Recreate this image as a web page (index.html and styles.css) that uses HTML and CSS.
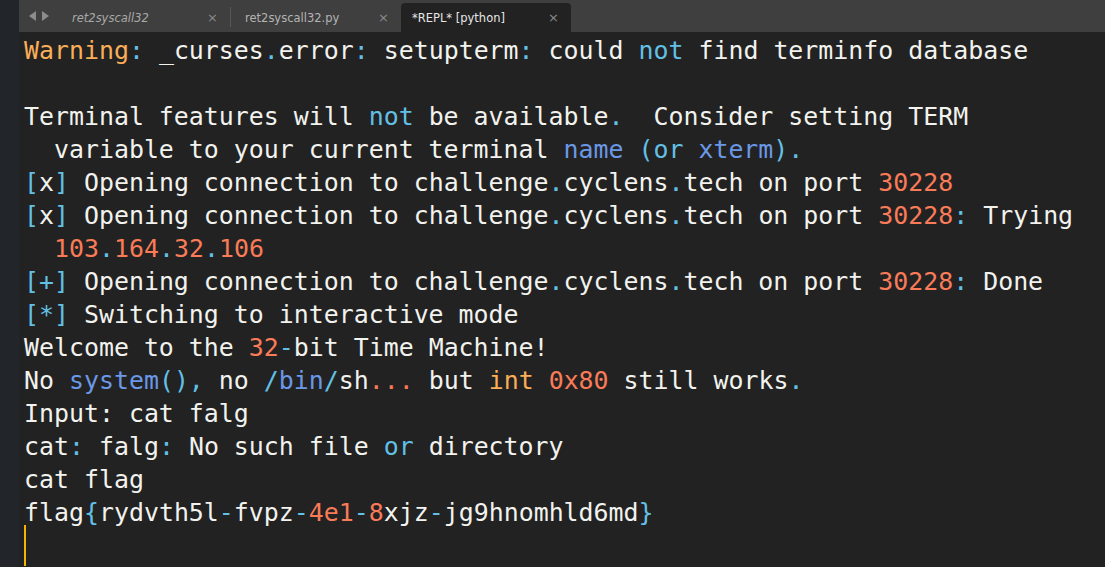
FILE: index.html
```html
<!DOCTYPE html>
<html>
<head>
<meta charset="utf-8">
<link rel="stylesheet" href="styles.css">
</head>
<body>
<div class="window">
  <div class="sidebar"></div>
  <div class="main">
    <div class="tabbar">
      <div class="nav">
        <svg width="24" height="12" viewBox="0 0 24 12"><path d="M8 1 L1 6 L8 11 Z" fill="#8c8c8c"/><path d="M14 1 L21 6 L14 11 Z" fill="#8c8c8c"/></svg>
      </div>
      <div class="tab preview"><span class="label">ret2syscall32</span><span class="close">×</span></div>
      <div class="sep"></div>
      <div class="tab"><span class="label">ret2syscall32.py</span><span class="close">×</span></div>
      <div class="tab active"><span class="label">*REPL* [python]</span><span class="close">×</span></div>
    </div>
    <div class="editor">
      <div class="line"><span class="o">Warning</span><span class="c">:</span> _curses<span class="c">.</span>error<span class="c">:</span> setupterm<span class="c">:</span> could <span class="c">not</span> find terminfo database</div>
      <div class="line"> </div>
      <div class="line">Terminal features will <span class="c">not</span> be available<span class="c">.</span>  Consider setting TERM</div>
      <div class="line">  variable to your current terminal <span class="b">name</span> <span class="c">(or</span> <span class="b">xterm</span><span class="c">).</span></div>
      <div class="line"><span class="c">[</span>x<span class="c">]</span> Opening connection to challenge<span class="c">.</span>cyclens<span class="c">.</span>tech on port <span class="n">30228</span></div>
      <div class="line"><span class="c">[</span>x<span class="c">]</span> Opening connection to challenge<span class="c">.</span>cyclens<span class="c">.</span>tech on port <span class="n">30228</span><span class="c">:</span> Trying</div>
      <div class="line">  <span class="n">103</span><span class="c">.</span><span class="n">164</span><span class="c">.</span><span class="n">32</span><span class="c">.</span><span class="n">106</span></div>
      <div class="line"><span class="c">[+]</span> Opening connection to challenge<span class="c">.</span>cyclens<span class="c">.</span>tech on port <span class="n">30228</span><span class="c">:</span> Done</div>
      <div class="line"><span class="c">[*]</span> Switching to interactive mode</div>
      <div class="line">Welcome to the <span class="n">32</span><span class="c">-</span>bit Time Machine!</div>
      <div class="line">No <span class="b">system</span><span class="c">(),</span> no <span class="c">/</span><span class="b">bin</span><span class="c">/</span>sh<span class="n">...</span> but <span class="o">int</span> <span class="n">0x80</span> still works<span class="c">.</span></div>
      <div class="line">Input: cat falg</div>
      <div class="line">cat<span class="c">:</span> falg<span class="c">:</span> No such file <span class="c">or</span> directory</div>
      <div class="line">cat flag</div>
      <div class="line">flag<span class="c">{</span>rydvth5l<span class="c">-</span>fvpz<span class="c">-</span><span class="n">4e1</span><span class="c">-</span><span class="n">8</span>xjz<span class="c">-</span>jg9hnomhld6md<span class="c">}</span></div>
      <div class="line cursorline"><span class="cursor"></span></div>
    </div>
  </div>
</div>
</body>
</html>
```
FILE: styles.css
```css
html, body {
  margin: 0;
  padding: 0;
  background: #222222;
  overflow: hidden;
}
.window {
  display: flex;
  width: 1105px;
  height: 567px;
}
.sidebar {
  width: 19px;
  flex: none;
  background: #22262b;
}
.main {
  flex: 1;
  display: flex;
  flex-direction: column;
  background: #222222;
  min-width: 0;
}
.tabbar {
  height: 32px;
  flex: none;
  background: #3f3f3f;
  display: flex;
  align-items: flex-end;
  font-family: "DejaVu Sans", sans-serif;
  font-size: 11.5px;
}
.nav {
  width: 39px;
  height: 32px;
  display: flex;
  align-items: center;
  padding-left: 9px;
  padding-bottom: 1px;
  box-sizing: border-box;
}
.nav svg {
  display: block;
}
.tab {
  height: 29px;
  display: flex;
  align-items: center;
  justify-content: space-between;
  padding: 0 12px 0 14px;
  box-sizing: border-box;
  color: #b4b4b4;
  flex: none;
  width: 170px;
}
.tab.preview {
  width: 172px;
  font-style: italic;
  color: #a8a8a8;
}
.sep {
  width: 1px;
  height: 20px;
  margin-bottom: 5px;
  background: #575757;
  flex: none;
}
.tab.active {
  background: #222222;
  color: #e6e6e6;
  border-radius: 4px 4px 0 0;
  padding-left: 11px;
}
.close {
  color: #8a8a8a;
  font-size: 13px;
  font-style: normal;
}
.editor {
  flex: 1;
  padding: 2px 0 0 5px;
  font-family: "DejaVu Sans Mono", monospace;
  font-size: 24.9px;
  line-height: 33px;
  color: #f2f2ee;
}
.line {
  height: 33px;
  white-space: pre;
}
.c { color: #62c0e6; }
.o { color: #f9ae58; }
.n { color: #f97b58; }
.b { color: #6b98e6; }
.cursorline {
  position: relative;
}
.cursor {
  position: absolute;
  left: 0;
  top: -4px;
  width: 2px;
  height: 41px;
  background: #f5b400;
}
```
